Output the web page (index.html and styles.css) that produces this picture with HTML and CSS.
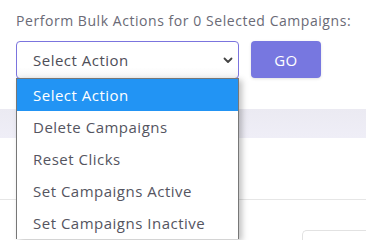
FILE: index.html
```html
<!DOCTYPE html>
<html>
<head>
<meta charset="utf-8">
<link rel="stylesheet" href="styles.css">
</head>
<body>
<div class="page">
  <div class="top">
    <div class="label">Perform Bulk Actions for 0 Selected Campaigns:</div>
    <div class="row">
      <div class="select">
        <span class="select-text">Select Action</span>
        <svg class="chev" width="10" height="7" viewBox="0 0 10 7"><path d="M1.5 1.5 L5 5 L8.5 1.5" fill="none" stroke="#444" stroke-width="1.8" stroke-linecap="round" stroke-linejoin="round"/></svg>
        <div class="menu">
          <div class="item active">Select Action</div>
          <div class="item">Delete Campaigns</div>
          <div class="item">Reset Clicks</div>
          <div class="item">Set Campaigns Active</div>
          <div class="item">Set Campaigns Inactive</div>
        </div>
      </div>
      <button class="go">GO</button>
    </div>
  </div>
  <div class="band"></div>
  <div class="section"></div>
  <div class="footer"><div class="box"></div></div>
</div>
</body>
</html>
```
FILE: styles.css
```css
html, body { margin: 0; padding: 0; background: #fff; }
body { font-family: "Open Sans", "Liberation Sans", sans-serif; overflow: hidden; width: 366px; height: 240px; }
.page { width: 366px; }
.top { height: 109px; padding: 0 16px; box-sizing: border-box; }
.label { padding-top: 11px; font-size: 14px; line-height: 20px; color: #6a6a76; white-space: nowrap; letter-spacing: 0.55px; }
.row { display: flex; gap: 12px; margin-top: 10px; }
.select { position: relative; width: 223px; height: 38px; box-sizing: border-box; border: 1px solid #7b74de; border-radius: 4px; background: linear-gradient(#fff 70%, #f6f6f6); display: flex; align-items: center; padding-left: 16px; }
.select-text { font-size: 15px; color: #4e4e58; letter-spacing: 0.5px; }
.chev { position: absolute; right: 5px; top: 15px; }
.go { width: 70px; height: 37px; border: none; border-radius: 4px; background: #7777e0; color: #fff; font-family: inherit; font-size: 15px; letter-spacing: 0.5px; padding: 0; box-shadow: 0 1px 3px rgba(0,0,0,0.12); }
.menu { position: absolute; left: -1px; top: 36px; width: 223px; box-sizing: border-box; border: 1px solid #777; border-bottom: none; background: #fff; box-shadow: 3px 2px 6px rgba(0,0,0,0.25); z-index: 5; }
.item { height: 32px; line-height: 32px; padding-left: 16px; font-size: 15px; letter-spacing: 0.5px; color: #55555f; white-space: nowrap; }
.item.active { background: #2294f4; color: #fff; }
.band { height: 29px; background: linear-gradient(#ebeaf2, #efeef7); }
.section { height: 61px; border-bottom: 1px solid #e6e6e6; }
.footer { display: flex; justify-content: flex-end; padding-top: 30px; }
.box { width: 63px; height: 20px; border: 1px solid #e2e2e2; border-right: none; border-bottom: none; border-top-left-radius: 5px; }
```
